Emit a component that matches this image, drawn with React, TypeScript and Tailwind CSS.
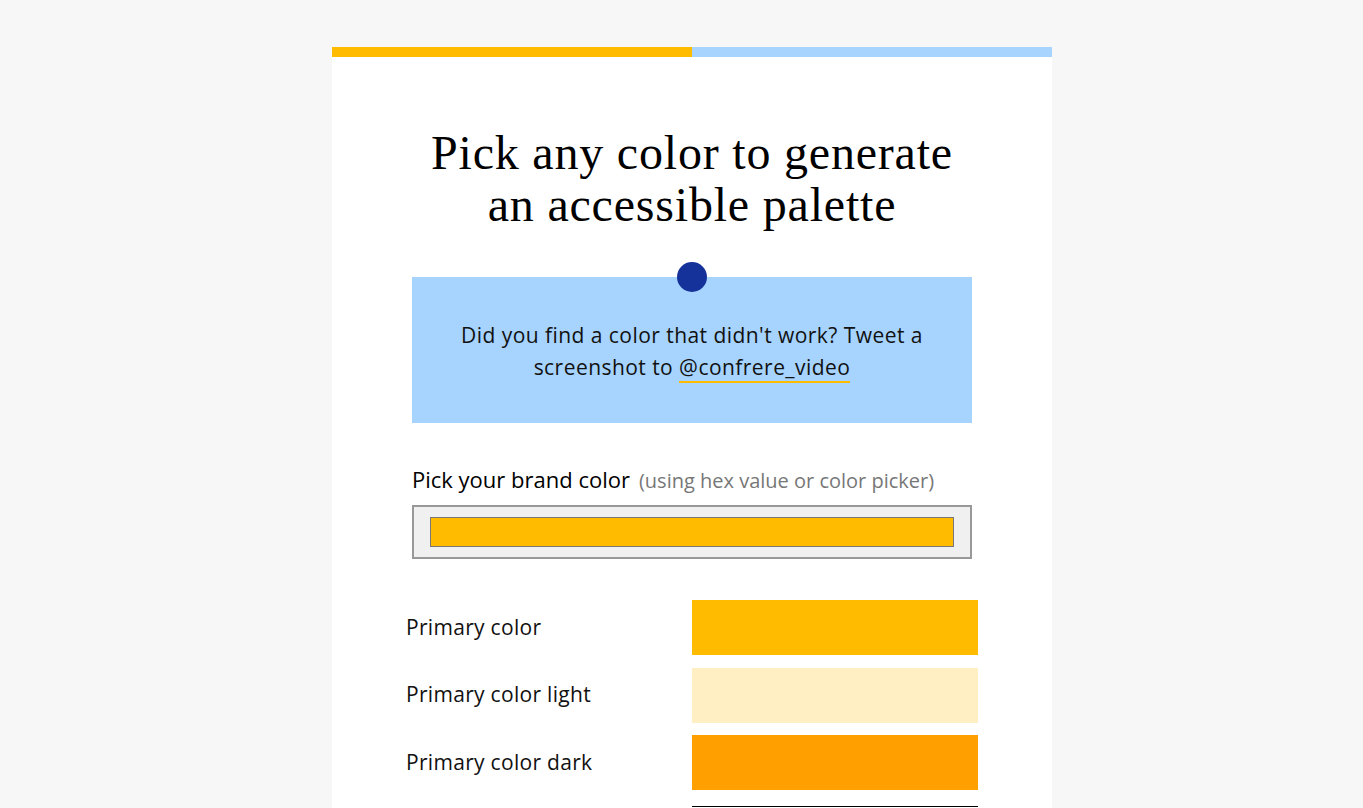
const rows = [
  { label: "Primary color", color: "bg-[#ffbb00]" },
  { label: "Primary color light", color: "bg-[#ffefc2]" },
  { label: "Primary color dark", color: "bg-[#ffa000]" },
];

const sans = "font-['Open_Sans','Noto_Sans',sans-serif]";

export default function App() {
  return (
    <div className="min-h-screen overflow-hidden bg-[#f7f7f7]">
      <div className="ml-[332px] mt-[47px] h-[761px] w-[720px] bg-white">
        <div className="flex h-[10px]">
          <div className="flex-1 bg-[#ffbb00]" />
          <div className="flex-1 bg-[#a6d4fe]" />
        </div>

        <h1 className="mt-[70px] text-center font-['Liberation_Serif',serif] text-[48px] leading-[52px] tracking-[0.8px] text-black">
          Pick any color to generate
          <br />
          an accessible palette
        </h1>

        <div className="relative mx-[80px] mt-[46px] flex h-[146px] items-center justify-center bg-[#a6d4fe] px-[20px]">
          <div className="absolute left-1/2 top-[-15px] h-[30px] w-[30px] -translate-x-1/2 rounded-full bg-[#15319a]" />
          <p className={`${sans} pt-[1px] text-center text-[21px] leading-[32px] tracking-[0.45px] text-[#111]`}>
            Did you find a color that didn't work? Tweet a
            <br />
            screenshot to{" "}
            <a className="border-b-2 border-[#ffbb00]">@confrere_video</a>
          </p>
        </div>

        <div className={`${sans} mx-[80px] mt-[40px]`}>
          <div className="flex items-baseline gap-[9px]">
            <span className="text-[22px] text-black">Pick your brand color</span>
            <span className="text-[20px] text-[#777]">(using hex value or color picker)</span>
          </div>
          <div className="mt-[9px] h-[54px] border-2 border-[#999] bg-[#f0f0f0] px-[16px] py-[10px]">
            <div className="h-full border border-[#777] bg-[#ffbb00]" />
          </div>
        </div>

        <div className={`${sans} mx-[74px] mt-[41px] flex flex-col gap-[12.5px]`}>
          {rows.map((r) => (
            <div key={r.label} className="grid h-[55px] grid-cols-2 items-center">
              <span className="text-[21px] tracking-[0.3px] text-[#111]">{r.label}</span>
              <div className={`h-full ${r.color}`} />
            </div>
          ))}
          <div className="mt-[3.5px] grid h-[55px] grid-cols-2">
            <span />
            <div className="h-full border-t border-black" />
          </div>
        </div>
      </div>
    </div>
  );
}
